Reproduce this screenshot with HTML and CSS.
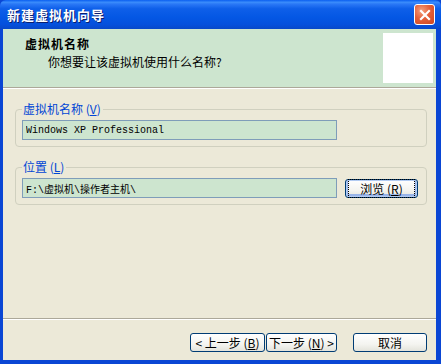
FILE: index.html
```html
<!DOCTYPE html>
<html lang="zh-CN">
<head>
    <meta charset="UTF-8">
    <title>新建虚拟机向导</title>
    <link rel="stylesheet" href="styles.css">
</head>
<body>

    <div class="window">
        <div class="titlebar">
            <span class="title">新建虚拟机向导</span>
            <button class="close-btn" aria-label="关闭">
                <svg width="12" height="12" viewBox="0 0 12 12">
                    <path d="M2 2 L10 10 M10 2 L2 10" stroke="#fff" stroke-width="2.2" stroke-linecap="square"/>
                </svg>
            </button>
        </div>

        <div class="client">
            <header class="wizard-header">
                <div class="header-text">
                    <div class="header-title">虚拟机名称</div>
                    <div class="header-sub">你想要让该虚拟机使用什么名称?</div>
                </div>
                <div class="header-image"></div>
            </header>

            <main class="wizard-body">
                <fieldset class="group">
                    <legend>虚拟机名称 (<u>V</u>)</legend>
                    <div class="row">
                        <input class="field" type="text" value="Windows XP Professional">
                    </div>
                </fieldset>

                <fieldset class="group">
                    <legend>位置 (<u>L</u>)</legend>
                    <div class="row">
                        <input class="field" type="text" value="F:\虚拟机\操作者主机\">
                        <button class="btn btn-focus"><span>浏览 (<u>R</u>)</span></button>
                    </div>
                </fieldset>
            </main>

            <footer class="wizard-footer">
                <button class="btn">&lt; 上一步 (<u>B</u>)</button>
                <button class="btn btn-next">下一步 (<u>N</u>) &gt;</button>
                <button class="btn btn-cancel">取消</button>
            </footer>
        </div>
    </div>

</body>
</html>
```

FILE: styles.css
```css
 body {
     margin: 0;
     font-family: "Noto Sans CJK SC", "DejaVu Sans", sans-serif;
     font-size: 12px;
     color: #000;
     background: #0a3fc8;
 }

 .window {
     width: 441px;
     height: 364px;
     box-sizing: border-box;
     display: flex;
     flex-direction: column;
     background: #0a46d4;
     padding: 0 5px 4px 3px;
 }

 /* Title bar */
 .titlebar {
     height: 29px;
     margin: 0 -5px 0 -3px;
     padding: 0 6px 0 7px;
     display: flex;
     align-items: center;
     justify-content: space-between;
     background: linear-gradient(to bottom, #0a5ff0 0%, #3a8cfb 8%, #2a78f6 14%, #0e5fe9 30%, #0457e4 60%, #0550dc 85%, #0848c8 100%);
     border-radius: 6px 6px 0 0;
     box-sizing: border-box;
 }

 .title {
     color: #fff;
     font-weight: bold;
     font-size: 13px;
     letter-spacing: 1px;
     text-shadow: 1px 1px 0 #0a1e6e;
 }

 .close-btn {
     width: 21px;
     height: 21px;
     padding: 0;
     border: 1px solid #fff;
     border-radius: 3px;
     background: radial-gradient(circle at 35% 30%, #f4a07e 0%, #e4603a 45%, #cc461f 100%);
     display: flex;
     align-items: center;
     justify-content: center;
 }

 .client {
     flex: 1;
     display: flex;
     flex-direction: column;
     background: #ece9d8;
 }

 /* Header */
 .wizard-header {
     height: 58px;
     display: flex;
     justify-content: space-between;
     background: #cde5cf;
     border-bottom: 1px solid #aca899;
     box-shadow: 0 1px 0 #fff;
 }

 .header-text {
     padding: 8px 0 0 22px;
 }

 .header-title {
     font-weight: bold;
     letter-spacing: 1px;
     line-height: 14px;
 }

 .header-sub {
     padding-left: 23px;
     margin-top: 4px;
     line-height: 14px;
 }

 .header-image {
     width: 50px;
     height: 50px;
     margin: 4px 3px 0 0;
     background: #fff;
 }

 /* Body */
 .wizard-body {
     flex: 1;
     padding: 15px 9px 0 12px;
     display: flex;
     flex-direction: column;
     gap: 14px;
     border-bottom: 1px solid #aca899;
     box-shadow: 0 1px 0 #fff;
 }

 .group {
     margin: 0;
     padding: 5px 6px 6px 6px;
     border: 1px solid #d0d0bf;
     border-radius: 4px;
 }

 .group legend {
     color: #0046d5;
     padding: 0 2px 0 1px;
     line-height: 12px;
 }

 .row {
     display: flex;
     align-items: center;
 }

 .field {
     width: 315px;
     height: 20px;
     box-sizing: border-box;
     margin: 0;
     padding: 0 3px;
     border: 1px solid #7f9db9;
     background: #cde5cf;
     font-family: "Liberation Mono", "Noto Sans CJK SC", monospace;
     font-size: 10px;
     color: #000;
     outline: none;
 }

 .row .btn {
     margin-left: 8px;
 }

 /* Buttons */
 .btn {
     width: 75px;
     height: 19px;
     padding: 0;
     border: 1px solid #003c74;
     border-radius: 3px;
     background: linear-gradient(to bottom, #ffffff 0%, #f4f4f0 60%, #e3e3db 100%);
     font-family: "Noto Sans CJK SC", "DejaVu Sans", sans-serif;
     font-size: 12px;
     color: #000;
     line-height: 15px;
 }

 .btn-focus {
     width: 73px;
     box-shadow: inset 0 0 0 1px #b2cbf2, inset 0 -1px 0 2px #98b4e8;
 }

 .btn-focus span {
     outline: 1px dotted #000;
     outline-offset: 0;
     padding: 0 11px;
 }

 .wizard-footer {
     height: 40px;
     display: flex;
     align-items: flex-start;
     padding: 13px 9px 0 0;
     box-sizing: border-box;
     justify-content: flex-end;
     margin-top: 1px;
 }

 .wizard-footer .btn-next {
     margin-left: 1px;
     width: 71px;
 }

 .wizard-footer .btn-cancel {
     margin-left: 16px;
     width: 74px;
 }
```
